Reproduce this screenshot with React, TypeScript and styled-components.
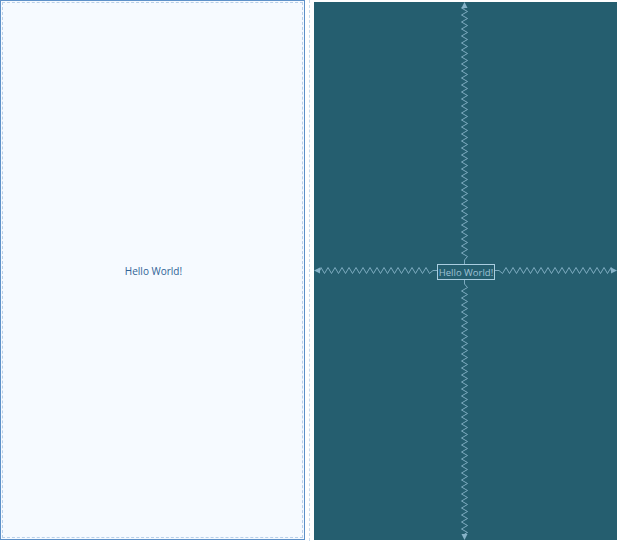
import React from "react";
import styled, { createGlobalStyle } from "styled-components";

const Global = createGlobalStyle`
  html, body { margin: 0; padding: 0; background: #ffffff; }
  body { font-family: "Open Sans", "Noto Sans", sans-serif; }
`;

const Page = styled.div`
  display: flex;
  flex-direction: row;
  width: 617px;
  height: 541px;
  overflow: hidden;
`;

const DesignPanel = styled.div`
  position: relative;
  box-sizing: border-box;
  width: 305px;
  height: 540px;
  border: 1px solid #5d90c8;
  background: #f6faff;
  display: flex;
  align-items: center;
  justify-content: center;
  &::before {
    content: "";
    position: absolute;
    inset: 1px;
    border: 1px dashed #b9d0ea;
    pointer-events: none;
  }
`;

const Gap = styled.div`
  width: 9px;
  height: 541px;
  display: flex;
  justify-content: center;
  &::before {
    content: "";
    width: 0;
    height: 100%;
    border-left: 1px dashed #c8dcee;
  }
`;

const DesignLabel = styled.span`
  font-size: 10px;
  color: #2f6396;
  position: relative;
  top: 1px;
  left: 1px;
`;

const BlueprintPanel = styled.div`
  position: relative;
  margin-top: 2px;
  width: 303px;
  height: 538px;
  background: #255e6f;
`;

const Overlay = styled.svg`
  position: absolute;
  inset: 0;
`;

const BlueprintBox = styled.div`
  position: absolute;
  left: 123px;
  top: 262px;
  box-sizing: border-box;
  width: 58px;
  height: 16px;
  border: 1px solid #a9cde0;
  display: flex;
  align-items: center;
  justify-content: center;
  font-size: 9.5px;
  color: #9fc3d6;
  white-space: nowrap;
  overflow: visible;
`;

const LINE = "#86b3c8";

function zigV(x: number, y0: number, y1: number, amp = 3, step = 3.5) {
  const dir = y1 > y0 ? 1 : -1;
  const pts: string[] = [`${x},${y0}`];
  let y = y0 + dir * 4;
  pts.push(`${x},${y}`);
  let side = 1;
  while ((y1 - y) * dir > 6) {
    y += dir * step;
    pts.push(`${x + side * amp},${y}`);
    side = -side;
  }
  pts.push(`${x},${y1 - dir * 3}`);
  pts.push(`${x},${y1}`);
  return pts.join(" ");
}

function zigH(y: number, x0: number, x1: number, amp = 3, step = 3.5) {
  const dir = x1 > x0 ? 1 : -1;
  const pts: string[] = [`${x0},${y}`];
  let x = x0 + dir * 4;
  pts.push(`${x},${y}`);
  let side = 1;
  while ((x1 - x) * dir > 6) {
    x += dir * step;
    pts.push(`${x},${y + side * amp}`);
    side = -side;
  }
  pts.push(`${x1 - dir * 3},${y}`);
  pts.push(`${x1},${y}`);
  return pts.join(" ");
}

export default function App() {
  const cx = 150.5;
  const cy = 268.5;
  return (
    <>
      <Global />
      <Page>
        <DesignPanel>
          <DesignLabel>Hello World!</DesignLabel>
        </DesignPanel>
        <Gap />
        <BlueprintPanel>
          <Overlay width="303" height="538" viewBox="0 0 303 538">
            <g fill="none" stroke={LINE} strokeWidth="1" opacity="0.9">
              <polyline points={zigV(cx, 262, 3)} />
              <polyline points={zigV(cx, 278, 535)} />
              <polyline points={zigH(cy, 123, 3)} />
              <polyline points={zigH(cy, 181, 300)} />
            </g>
            <g fill={LINE}>
              <polygon points={`${cx},0 ${cx - 3},6 ${cx + 3},6`} />
              <polygon points={`${cx},538 ${cx - 3},532 ${cx + 3},532`} />
              <polygon points={`0,${cy} 6,${cy - 3} 6,${cy + 3}`} />
              <polygon points={`303,${cy} 297,${cy - 3} 297,${cy + 3}`} />
            </g>
          </Overlay>
          <BlueprintBox>Hello World!</BlueprintBox>
        </BlueprintPanel>
      </Page>
    </>
  );
}
